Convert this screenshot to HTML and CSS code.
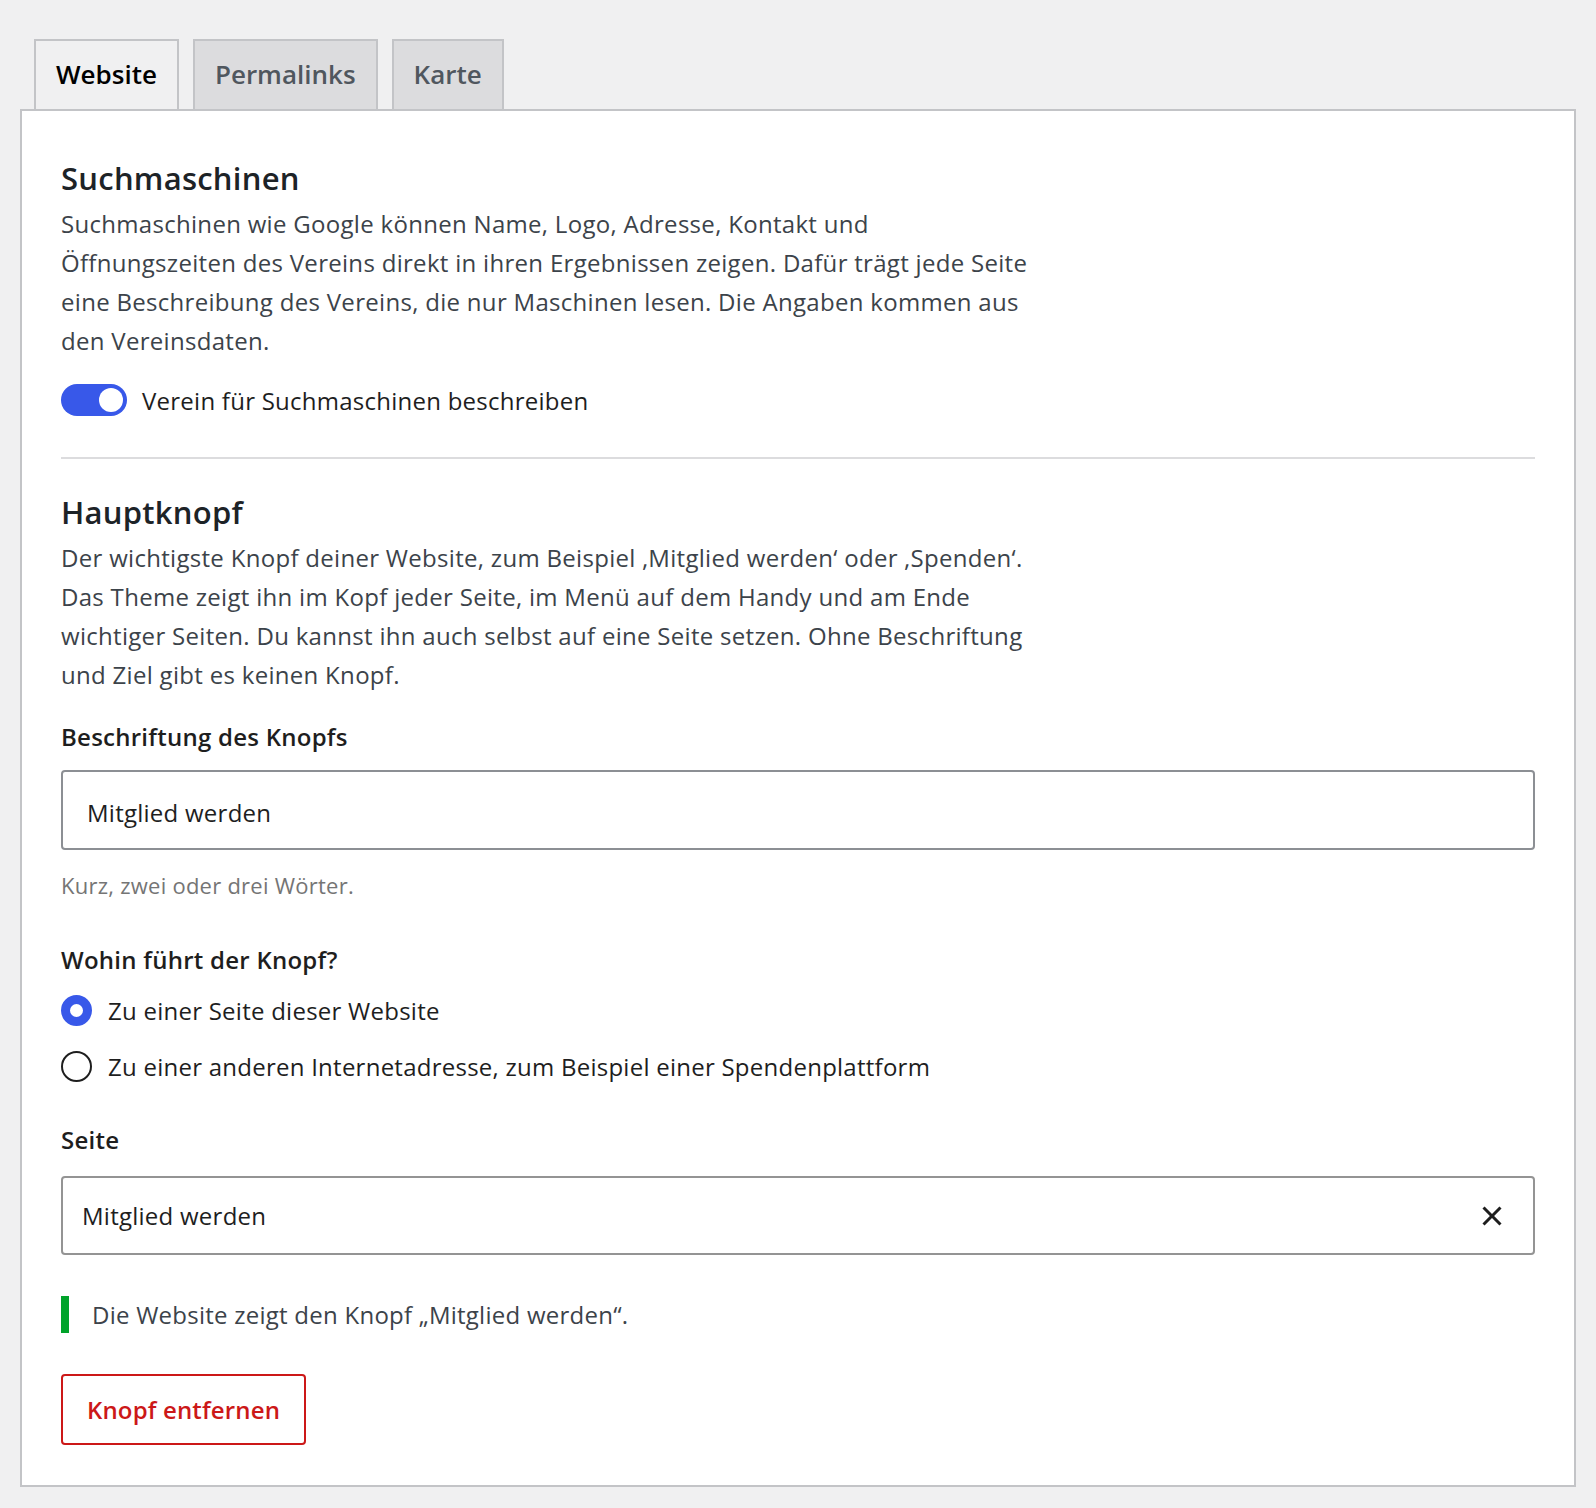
FILE: index.html
```html
<!DOCTYPE html>
<html lang="de">
<head>
    <meta charset="UTF-8">
    <title>Einstellungen – Website</title>
    <link rel="stylesheet" href="styles.css">
</head>
<body>
    <nav class="tabs">
        <a class="tab active" href="#">Website</a>
        <a class="tab" href="#">Permalinks</a>
        <a class="tab" href="#">Karte</a>
    </nav>
    <div class="panel">
        <section>
            <h2>Suchmaschinen</h2>
            <p class="intro">Suchmaschinen wie Google können Name, Logo, Adresse, Kontakt und<br>
                Öffnungszeiten des Vereins direkt in ihren Ergebnissen zeigen. Dafür trägt jede Seite<br>
                eine Beschreibung des Vereins, die nur Maschinen lesen. Die Angaben kommen aus<br>
                den Vereinsdaten.</p>
            <label class="toggle-row">
                <span class="toggle"><span class="knob"></span></span>
                Verein für Suchmaschinen beschreiben
            </label>
        </section>

        <hr class="divider">

        <section>
            <h2>Hauptknopf</h2>
            <p class="intro">Der wichtigste Knopf deiner Website, zum Beispiel ‚Mitglied werden‘ oder ‚Spenden‘.<br>
                Das Theme zeigt ihn im Kopf jeder Seite, im Menü auf dem Handy und am Ende<br>
                wichtiger Seiten. Du kannst ihn auch selbst auf eine Seite setzen. Ohne Beschriftung<br>
                und Ziel gibt es keinen Knopf.</p>

            <label class="field-label" for="buttonLabel">Beschriftung des Knopfs</label>
            <input class="text-input" id="buttonLabel" type="text" value="Mitglied werden">
            <p class="hint">Kurz, zwei oder drei Wörter.</p>

            <div class="field-label spaced">Wohin führt der Knopf?</div>
            <div class="choices">
                <label class="radio-row"><input type="radio" name="target" checked> Zu einer Seite dieser Website</label>
                <label class="radio-row"><input type="radio" name="target"> Zu einer anderen Internetadresse, zum Beispiel einer Spendenplattform</label>
            </div>

            <div class="field-label page-label">Seite</div>
            <div class="select-box">
                <span>Mitglied werden</span>
                <button class="clear" type="button" aria-label="Auswahl entfernen">
                    <svg width="48" height="48" viewBox="0 0 24 24"><path d="M12 13.06l3.712 3.713 1.061-1.06L13.061 12l3.712-3.712-1.06-1.06L12 10.938 8.288 7.227l-1.061 1.06L10.939 12l-3.712 3.712 1.06 1.061L12 13.061z" fill="#1e1e1e"/></svg>
                </button>
            </div>

            <div class="notice">Die Website zeigt den Knopf „Mitglied werden“.</div>

            <button class="danger" type="button">Knopf entfernen</button>
        </section>
    </div>
</body>
</html>
```

FILE: styles.css
```css
body {
    margin: 0;
    padding: 39px 20px 21px;
    background-color: #f0f0f1;
    color: #3c434a;
    font-family: "Segoe UI", "Open Sans", sans-serif;
    font-size: 24px;
    letter-spacing: 0.25px;
}

.tabs {
    display: flex;
    gap: 14px;
    padding-left: 14px;
}

.tab {
    display: block;
    height: 68px;
    line-height: 66px;
    padding: 0 20px;
    border: 2px solid #c3c4c7;
    border-bottom: none;
    background-color: #dcdcde;
    color: #50575e;
    font-size: 26px;
    font-weight: 600;
    letter-spacing: 0;
    text-decoration: none;
}

.tab.active {
    background-color: #f0f0f1;
    color: #000;
}

.panel {
    background-color: #fff;
    border: 2px solid #c3c4c7;
    padding: 47px 39px 40px;
}

h2 {
    margin: 0 0 6px;
    font-size: 31px;
    line-height: 40px;
    font-weight: 600;
    color: #1d2327;
}

.intro {
    margin: 0;
    line-height: 39px;
    letter-spacing: 0.3px;
}

.toggle-row {
    display: flex;
    align-items: center;
    gap: 15px;
    margin-top: 24px;
    height: 32px;
    color: #1e1e1e;
}

.toggle {
    position: relative;
    width: 66px;
    height: 32px;
    border-radius: 16px;
    background-color: #3858e9;
}

.knob {
    position: absolute;
    top: 4px;
    right: 4px;
    width: 24px;
    height: 24px;
    border-radius: 50%;
    background-color: #fff;
}

.divider {
    margin: 41px 0 33px;
    height: 0;
    border: none;
    border-top: 2px solid #dcdcde;
}

.field-label {
    display: block;
    margin-top: 25px;
    line-height: 36px;
    font-weight: 600;
    color: #1e1e1e;
}

.field-label.spaced {
    margin-top: 41px;
}

.field-label.page-label {
    margin-top: 36px;
}

.text-input {
    display: block;
    box-sizing: border-box;
    width: 100%;
    height: 80px;
    margin-top: 15px;
    padding: 5px 24px 0;
    border: 2px solid #8c8f94;
    border-radius: 4px;
    font-family: inherit;
    font-size: 24px;
    letter-spacing: inherit;
    color: #1e1e1e;
}

.hint {
    margin: 19px 0 0;
    font-size: 22px;
    line-height: 32px;
    color: #757575;
}

.choices {
    display: flex;
    flex-direction: column;
    gap: 16px;
    margin-top: 12px;
}

.radio-row {
    display: flex;
    align-items: center;
    gap: 16px;
    height: 40px;
    color: #1e1e1e;
}

.radio-row input {
    appearance: none;
    box-sizing: border-box;
    width: 31px;
    height: 31px;
    margin: 0;
    border: 2px solid #1e1e1e;
    border-radius: 50%;
    background-color: #fff;
}

.radio-row input:checked {
    border: 9px solid #3858e9;
}

.select-box {
    display: flex;
    align-items: center;
    justify-content: space-between;
    box-sizing: border-box;
    height: 79px;
    margin-top: 18px;
    padding: 0 17px 0 19px;
    border: 2px solid #949494;
    border-radius: 4px;
    color: #1e1e1e;
}

.clear {
    display: flex;
    padding: 0;
    border: none;
    background: none;
}

.notice {
    margin-top: 41px;
    padding-left: 23px;
    border-left: 8px solid #00a32a;
    line-height: 37px;
}

.danger {
    display: block;
    height: 71px;
    margin-top: 41px;
    padding: 0 24px;
    border: 2px solid #cc1818;
    border-radius: 4px;
    background-color: #fff;
    color: #cc1818;
    font-family: inherit;
    font-size: 24px;
    font-weight: 600;
    letter-spacing: 0.15px;
}
```
